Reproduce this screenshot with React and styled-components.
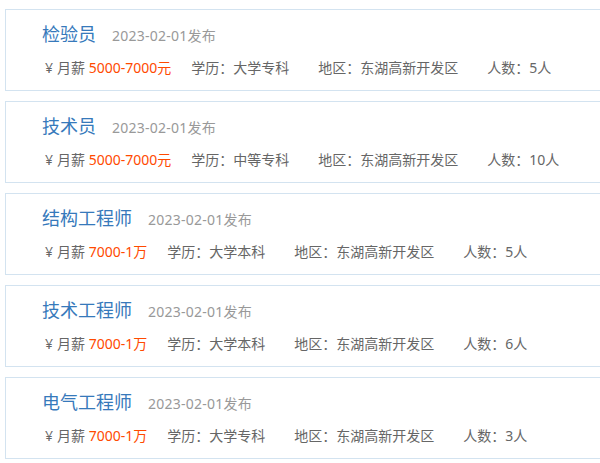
import React from 'react';
import styled, { createGlobalStyle } from 'styled-components';

const GlobalStyle = createGlobalStyle`
  body {
    margin: 0;
    background: #fff;
    font-family: "Noto Sans", "Noto Sans CJK SC", sans-serif;
  }
`;

const List = styled.div`
  padding: 9px 0 0 5px;
  display: flex;
  flex-direction: column;
  gap: 10px;
  overflow: hidden;
`;

const Card = styled.div`
  width: 620px;
  height: 82px;
  box-sizing: border-box;
  border: 1px solid #d3e3f0;
  padding: 12px 0 0 36px;
  background: #fff;
`;

const Head = styled.div`
  display: flex;
  align-items: baseline;
  height: 24px;
  line-height: 24px;
`;

const Title = styled.span`
  font-size: 18px;
  color: #3679bb;
`;

const Date = styled.span`
  font-size: 14px;
  color: #999;
  margin-left: 16px;
  letter-spacing: 0.25px;
`;

const Info = styled.div`
  display: flex;
  margin-top: 12px;
  line-height: 20px;
  font-size: 14px;
  color: #666;
  padding-left: 3px;
`;

const Item = styled.span`
  margin-right: ${p => (p.$salary ? '20px' : '29px')};
  white-space: nowrap;
`;

const Yen = styled.span`
  margin-right: 4px;
`;

const Salary = styled.span`
  color: #ff4a00;
`;

const jobs = [
  { title: '检验员', salary: '5000-7000元', edu: '大学专科', num: '5人' },
  { title: '技术员', salary: '5000-7000元', edu: '中等专科', num: '10人' },
  { title: '结构工程师', salary: '7000-1万', edu: '大学本科', num: '5人' },
  { title: '技术工程师', salary: '7000-1万', edu: '大学本科', num: '6人' },
  { title: '电气工程师', salary: '7000-1万', edu: '大学专科', num: '3人' },
];

export default function App() {
  return (
    <>
      <GlobalStyle />
      <List>
        {jobs.map((j, i) => (
          <Card key={i}>
            <Head>
              <Title>{j.title}</Title>
              <Date>2023-02-01发布</Date>
            </Head>
            <Info>
              <Item $salary><Yen>¥</Yen>月薪 <Salary>{j.salary}</Salary></Item>
              <Item>学历：{j.edu}</Item>
              <Item>地区：东湖高新开发区</Item>
              <Item>人数：{j.num}</Item>
            </Info>
          </Card>
        ))}
      </List>
    </>
  );
}
